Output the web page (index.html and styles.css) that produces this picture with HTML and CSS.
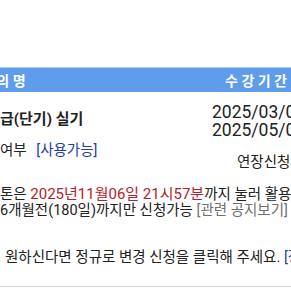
FILE: index.html
```html
<!DOCTYPE html>
<html lang="ko">
<head>
  <meta charset="UTF-8" />
  <title>수강 목록</title>
  <link rel="stylesheet" href="styles.css">
</head>
<body>

  <div class="board">
    <div class="thead">
      <span class="col-name">강 의 명</span>
      <span class="col-period">수 강 기 간</span>
    </div>

    <div class="course">
      <div class="info">
        <div class="title">급(단기) 실기</div>
        <div class="status">여부 <a class="link">[사용가능]</a></div>
      </div>
      <div class="period">
        <div class="date">2025/03/04 ~</div>
        <div class="date">2025/05/04</div>
        <div class="extend">연장신청</div>
      </div>
    </div>

    <div class="notice">
      <p>톤은 <span class="due">2025년11월06일 21시57분</span>까지 눌러 활용</p>
      <p>6개월전(180일)까지만 신청가능 <a class="more">[관련 공지보기]</a></p>
    </div>

    <p class="change">원하신다면 정규로 변경 신청을 클릭해 주세요. <a class="link">[정규변경]</a></p>

    <div class="rule"></div>
  </div>

</body>
</html>
```

FILE: styles.css
```css
body {
  margin: 0;
  width: 291px;
  height: 291px;
  overflow: hidden;
  background: #fff;
  color: #222;
  font-family: Roboto, "Noto Sans CJK KR", sans-serif;
  font-size: 14.5px;
}
.board {
  padding-top: 67px;
  white-space: nowrap;
}
.thead {
  height: 24px;
  border-top: 1px solid #a9cbf6;
  background: #5e9dec;
  color: white;
  font-weight: bold;
  font-size: 14px;
  display: flex;
  justify-content: space-between;
  align-items: center;
}
.col-name {
  margin-left: -20px;
}
.col-period {
  margin-right: 4px;
}
.course {
  display: grid;
  grid-template-columns: 212px auto;
  padding-top: 11px;
}
.title {
  margin-top: 7px;
  font-weight: bold;
  font-size: 15px;
  line-height: 18px;
}
.status {
  margin-top: 14px;
  line-height: 18px;
}
.link {
  color: #23409a;
  margin-left: 6px;
}
.date {
  font-size: 17.5px;
  line-height: 18px;
}
.extend {
  margin-top: 15px;
  padding-left: 25px;
  line-height: 18px;
}
.notice {
  margin-top: 14px;
}
.notice p {
  margin: 0;
  line-height: 16px;
}
.due {
  color: #b3222b;
  font-size: 15px;
}
.more {
  color: #707070;
}
.change {
  margin: 31px 0 0 5px;
  line-height: 16px;
}
.change .link {
  margin-left: 0;
}
.rule {
  margin-top: 20px;
  border-top: 1px solid #d4d4d4;
}
```
